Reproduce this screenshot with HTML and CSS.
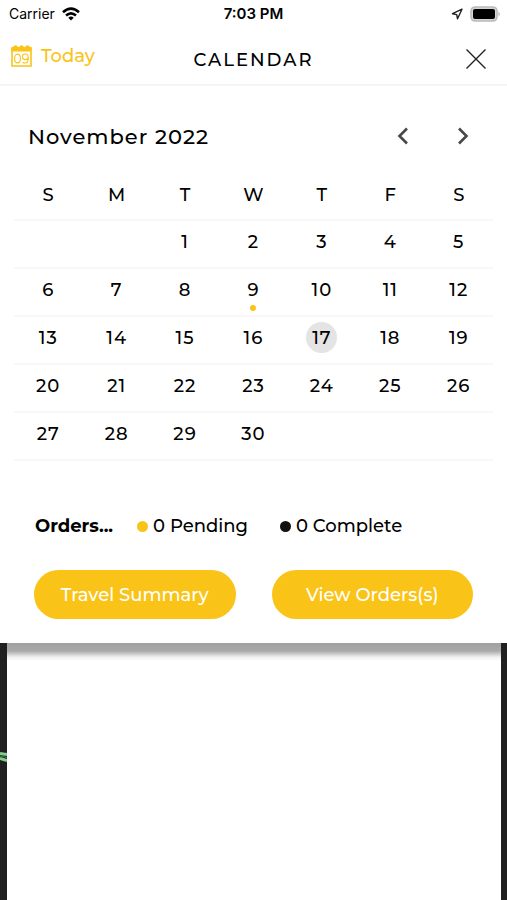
FILE: index.html
```html
<!DOCTYPE html>
<html lang="en">
<head>
<meta charset="utf-8">
<meta name="viewport" content="width=device-width, initial-scale=1">
<title>Calendar</title>
<link rel="stylesheet" href="styles.css">
</head>
<body>
<main class="panel">
  <div class="status">
    <div class="status-side">
      <span class="carrier">Carrier</span>
      <svg width="18" height="14" viewBox="0 0 18 14" fill="none" stroke="#000" stroke-width="2.6"><path d="M1 5.2Q9-1.8 17 5.2M4 8.5Q9 4.1 14 8.5"/><path d="M9 13.5 6.3 10.7Q9 8.4 11.7 10.7Z" fill="#000" stroke="none"/></svg>
    </div>
    <span class="clock">7:03 PM</span>
    <div class="status-side status-end">
      <svg width="12" height="12" viewBox="0 0 12 12" fill="none" stroke="#222" stroke-width="1.4" stroke-linejoin="round"><path d="M11 1.2 1.5 5.7 5.7 6.6 6.5 10.8Z"/></svg>
      <svg width="31" height="16" viewBox="0 0 31 16"><rect x="1" y="1" width="26" height="14" rx="4" fill="#d4d4d4" stroke="#bbb" stroke-width="1.6"/><rect x="3" y="3" width="22" height="10" rx="2" fill="#000"/><path d="M28.5 5.5Q31 8 28.5 10.5Z" fill="#aaa"/></svg>
    </div>
  </div>
  <header class="header">
    <button class="today" type="button">
      <svg width="21" height="22" viewBox="0 0 21 22" fill="none" stroke="#fac317"><path d="M1 3h19v18H1z" stroke-width="1.6"/><path d="M1 2.5h2V1h3v1.5h3V1h3v1.5h3V1h3v1.5h2V6H1z" fill="#fac317" stroke-width="1"/><ellipse cx="6.5" cy="13.5" rx="2.9" ry="4.4" stroke-width="1.1"/><path d="M11.6 17.2q1 .8 2.5.8 3.2 0 3.2-5 0-4-3-4-2.9 0-2.9 2.8t2.9 2.8q2.5 0 3-2.2" stroke-width="1.1"/></svg>
      <span>Today</span>
    </button>
    <h1 class="title">CALENDAR</h1>
    <button class="close" type="button" aria-label="Close">
      <svg width="22" height="22" viewBox="0 0 22 22" stroke="#222" stroke-width="1.4"><path d="M1.5 1.5l19 19M20.5 1.5l-19 19"/></svg>
    </button>
  </header>
  <section class="month-bar">
    <h2 class="month">November 2022</h2>
    <button class="arrow" type="button" aria-label="Previous month"><svg width="12" height="18" viewBox="0 0 12 18" fill="none" stroke="#484848" stroke-width="2.6"><path d="M10 1.5 2.5 9 10 16.5"/></svg></button>
    <button class="arrow" type="button" aria-label="Next month"><svg width="12" height="18" viewBox="0 0 12 18" fill="none" stroke="#484848" stroke-width="2.6"><path d="M2 1.5 9.5 9 2 16.5"/></svg></button>
  </section>
  <table class="days">
    <thead><tr><th>S</th><th>M</th><th>T</th><th>W</th><th>T</th><th>F</th><th>S</th></tr></thead>
    <tbody>
      <tr><td></td><td></td><td><button class="day">1</button></td><td><button class="day">2</button></td><td><button class="day">3</button></td><td><button class="day">4</button></td><td><button class="day">5</button></td></tr>
      <tr><td><button class="day">6</button></td><td><button class="day">7</button></td><td><button class="day">8</button></td><td><button class="day marked">9</button></td><td><button class="day">10</button></td><td><button class="day">11</button></td><td><button class="day">12</button></td></tr>
      <tr><td><button class="day">13</button></td><td><button class="day">14</button></td><td><button class="day">15</button></td><td><button class="day">16</button></td><td><button class="day selected">17</button></td><td><button class="day">18</button></td><td><button class="day">19</button></td></tr>
      <tr><td><button class="day">20</button></td><td><button class="day">21</button></td><td><button class="day">22</button></td><td><button class="day">23</button></td><td><button class="day">24</button></td><td><button class="day">25</button></td><td><button class="day">26</button></td></tr>
      <tr><td><button class="day">27</button></td><td><button class="day">28</button></td><td><button class="day">29</button></td><td><button class="day">30</button></td><td></td><td></td><td></td></tr>
    </tbody>
  </table>
  <section class="orders">
    <strong class="orders-label">Orders...</strong>
    <span class="count pending">0 Pending</span>
    <span class="count complete">0 Complete</span>
  </section>
  <div class="actions">
    <button class="action" type="button">Travel Summary</button>
    <button class="action" type="button">View Orders(s)</button>
  </div>
</main>
<div class="backdrop">
  <svg class="route" width="7" height="12" viewBox="0 0 7 12" fill="none"><path d="M0 2.5 7 3.5M0 7.5 7 9.5" stroke="#7fd18a" stroke-width="3"/><path d="M0 5 7 6.5" stroke="#507857"/></svg>
  <div class="sheet"></div>
</div>
</body>
</html>
```
FILE: styles.css
```css
* { box-sizing: border-box; }

body {
  margin: 0;
  min-height: 100vh;
  display: flex;
  flex-direction: column;
  background: #202020;
  color: #000;
  font-family: Montserrat, Inter, sans-serif;
  font-size: 18px;
  font-weight: 500;
}

button {
  padding: 0;
  border: 0;
  background: none;
  color: inherit;
  font: inherit;
}

svg { display: block; flex: none; }

.panel { background: #fff; padding-bottom: 24px; }

.status {
  display: grid;
  grid-template-columns: 1fr auto 1fr;
  align-items: center;
  height: 27px;
  padding: 0 6px;
  font: 400 14px/16px Inter, sans-serif;
}

.status-side { display: flex; align-items: center; gap: 7px; }
.status-end { justify-content: flex-end; }
.carrier { padding-left: 3px; }
.clock { font-size: 15px; font-weight: 600; }

.header {
  display: grid;
  grid-template-columns: 1fr auto 1fr;
  align-items: center;
  height: 59px;
  padding: 0 11px;
  border-bottom: 2px solid #f5f5f5;
}

.today {
  display: flex;
  align-items: center;
  justify-self: start;
  gap: 9px;
  color: #fac317;
}

.title {
  margin: 0;
  padding: 8px 0 0;
  font-size: 18px;
  font-weight: 500;
  letter-spacing: 2px;
}

.close { justify-self: end; padding: 7px 9px 0 0; }

.month-bar {
  display: flex;
  align-items: center;
  gap: 20px;
  height: 100px;
  padding: 0 24px 0 28px;
}

.month {
  flex: 1;
  margin: 0;
  font-size: 21px;
  font-weight: 500;
  letter-spacing: 1px;
}

.arrow {
  display: flex;
  align-items: center;
  justify-content: center;
  width: 40px;
  height: 40px;
}

.days {
  width: calc(100% - 28px);
  margin: -13px 14px 0;
  border-collapse: separate;
  border-spacing: 0;
  table-layout: fixed;
}

.days th, .days td {
  height: 48px;
  padding: 0 0 5px;
  border-bottom: 2px solid #f8f8f8;
  text-align: center;
  vertical-align: middle;
  font-weight: 500;
}

.days th { padding-bottom: 3px; }

.day {
  position: relative;
  display: block;
  width: 31px;
  height: 31px;
  margin: 0 auto;
  border-radius: 50%;
  letter-spacing: 1px;
}

.selected { background: #e4e4e4; }

.marked::after {
  content: "";
  position: absolute;
  left: 50%;
  top: 100%;
  width: 6px;
  height: 6px;
  margin-left: -3px;
  border-radius: 50%;
  background: #fac317;
}

.orders {
  display: flex;
  align-items: center;
  gap: 24px;
  height: 24px;
  margin: 53px 35px 32px;
}

.orders-label { font-weight: 700; }

.count { display: flex; align-items: center; gap: 5px; }
.count + .count { margin-left: 8px; }

.count::before {
  content: "";
  width: 11px;
  height: 11px;
  border-radius: 50%;
  background: #111;
}

.pending::before { background: #fac317; }

.actions {
  display: grid;
  grid-template-columns: 1fr 1fr;
  gap: 36px;
  padding: 0 34px;
}

.action {
  height: 49px;
  border-radius: 25px;
  background: #fac317;
  color: #fff;
}

.backdrop {
  position: relative;
  flex: 1;
  display: flex;
  padding: 0 6px 0 7px;
}

.sheet {
  flex: 1;
  background: linear-gradient(#a0a0a0, #aaa 8px, #f0f0f0 14px, #fff 18px);
}

.route { position: absolute; left: 0; top: 108px; }
```
